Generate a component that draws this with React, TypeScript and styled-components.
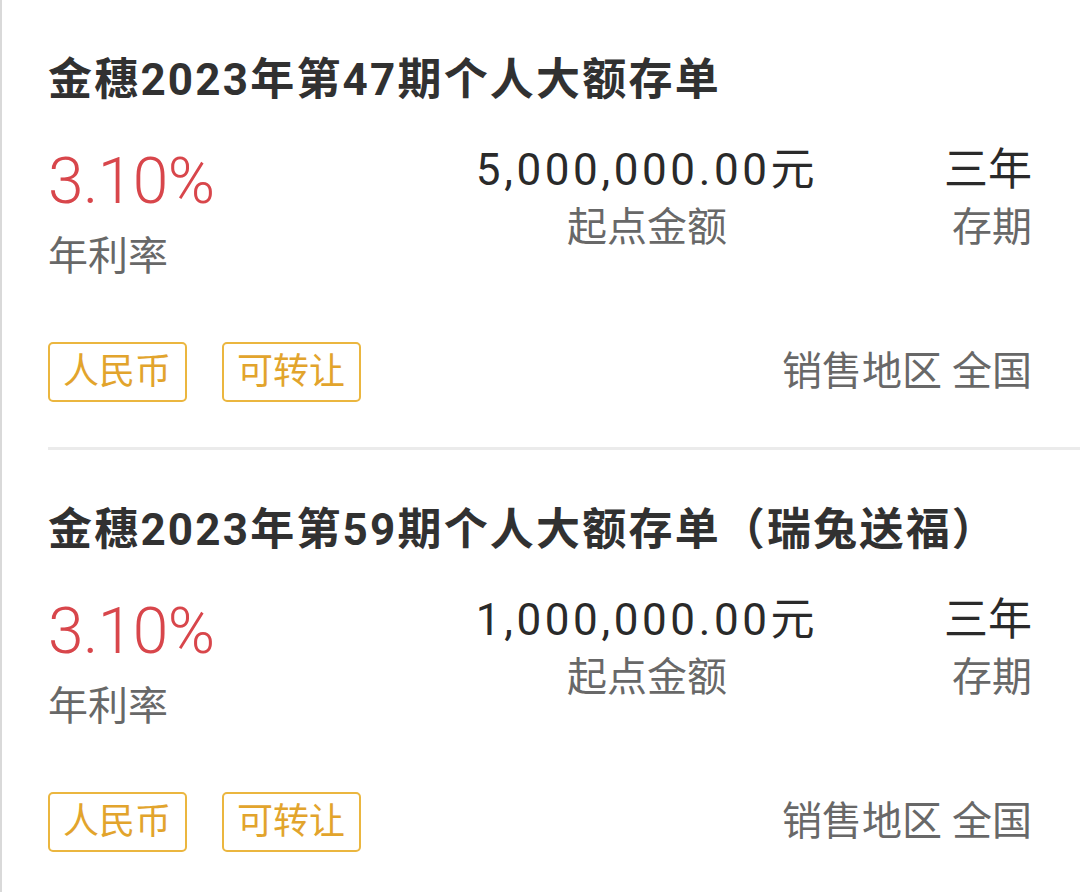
import styled, { createGlobalStyle } from "styled-components";

interface IDeposit {
    title: string;
    rate: string;
    amount: string;
    term: string;
    tags: string[];
    region: string;
}

const deposits: IDeposit[] = [
    {
        title: '金穗2023年第47期个人大额存单',
        rate: '3.10%',
        amount: '5,000,000.00元',
        term: '三年',
        tags: ['人民币', '可转让'],
        region: '全国',
    },
    {
        title: '金穗2023年第59期个人大额存单（瑞兔送福）',
        rate: '3.10%',
        amount: '1,000,000.00元',
        term: '三年',
        tags: ['人民币', '可转让'],
        region: '全国',
    },
]

const App: React.FC = () => {
    return (
        <>
            <GlobalStyle />
            <Page>
                {deposits.map(item =>
                    <Card key={item.title}>
                        <Title>{item.title}</Title>
                        <Stats>
                            <Column $align='flex-start'>
                                <Rate>{item.rate}</Rate>
                                <Label $gap={10}>年利率</Label>
                            </Column>
                            <Column $align='center'>
                                <Value $spacing={3.6}>{item.amount}</Value>
                                <Label $gap={5}>起点金额</Label>
                            </Column>
                            <Column $align='flex-end'>
                                <Value $spacing={0}>{item.term}</Value>
                                <Label $gap={5}>存期</Label>
                            </Column>
                        </Stats>
                        <Footer>
                            <Tags>
                                {item.tags.map(tag => <Tag key={tag}>{tag}</Tag>)}
                            </Tags>
                            <Region>销售地区 {item.region}</Region>
                        </Footer>
                    </Card>
                )}
            </Page>
        </>
    )
}

const GlobalStyle = createGlobalStyle`
    body {
        margin: 0;
        background: #FFFFFF;
        font-family: Roboto, "Noto Sans CJK SC", sans-serif;
    }
`

const Page = styled.div`
    min-height: 100vh;
    border-left: 2px solid #D9D9D9;
    overflow: hidden;
`

const Card = styled.section`
    margin-left: 46px;
    padding: 50px 48px 45px 0;
    border-bottom: 3px solid #EBEBEB;
`

const Title = styled.h2`
    margin: 0;
    font-size: 44px;
    line-height: 60px;
    font-weight: 700;
    letter-spacing: 2.2px;
    color: #313131;
    white-space: nowrap;
`

const Stats = styled.div`
    display: grid;
    grid-template-columns: 399px 400px 1fr;
    margin-top: 32px;
`

const Column = styled.div<{ $align: string }>`
    display: flex;
    flex-direction: column;
    align-items: ${p => p.$align};
`

const Rate = styled.div`
    font-size: 64px;
    line-height: 80px;
    font-weight: 300;
    letter-spacing: -0.5px;
    color: #D8464B;
`

const Value = styled.div<{ $spacing: number }>`
    font-size: 44px;
    line-height: 56px;
    color: #2A2A2A;
    letter-spacing: ${p => p.$spacing}px;
    white-space: nowrap;
`

const Label = styled.div<{ $gap: number }>`
    margin-top: ${p => p.$gap}px;
    font-size: 40px;
    line-height: 50px;
    color: #686868;
`

const Footer = styled.div`
    display: flex;
    align-items: center;
    justify-content: space-between;
    margin-top: 60px;
`

const Tags = styled.div`
    display: flex;
    gap: 35px;
`

const Tag = styled.span`
    padding: 0 14px 0 13px;
    border: 2px solid #EBB63F;
    border-radius: 5px;
    font-size: 36px;
    line-height: 56px;
    color: #E2A42C;
`

const Region = styled.div`
    font-size: 40px;
    line-height: 50px;
    color: #686868;
    white-space: nowrap;
`

export default App;
